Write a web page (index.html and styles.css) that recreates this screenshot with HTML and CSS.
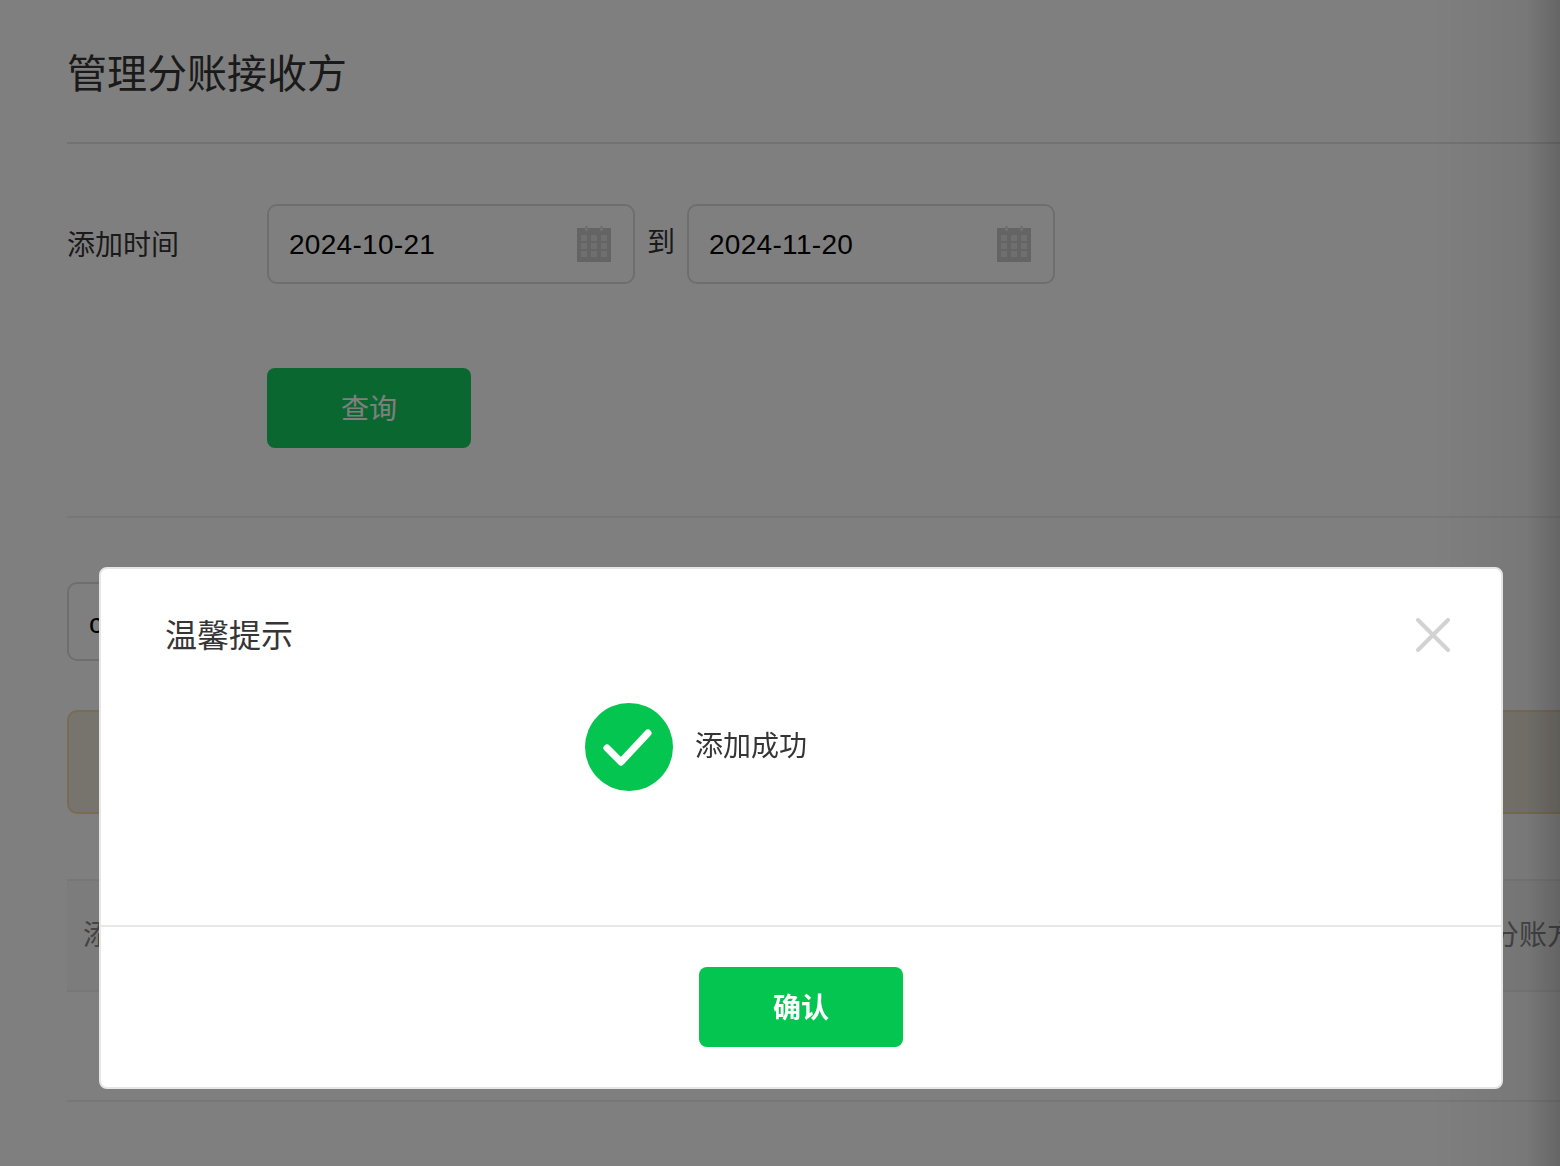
FILE: index.html

```html
<!DOCTYPE html>
<html>
  <head>
    <meta charset="utf-8">
    <title>管理分账接收方</title>
    <link rel="stylesheet" href="styles.css">
  </head>
  <body>
    <div class="page">
      <h1 class="page-title">管理分账接收方</h1>

      <div class="filter-row">
        <label class="filter-label">添加时间</label>
        <div class="date-input">
          <span class="date-value">2024-10-21</span>
          <svg class="calendar" viewBox="0 0 34 36" width="34" height="36">
            <use href="#calendar-icon"></use>
          </svg>
        </div>
        <span class="date-sep">到</span>
        <div class="date-input">
          <span class="date-value">2024-11-20</span>
          <svg class="calendar" viewBox="0 0 34 36" width="34" height="36">
            <use href="#calendar-icon"></use>
          </svg>
        </div>
      </div>

      <div class="filter-actions">
        <button class="btn-primary">查询</button>
      </div>

      <div class="search-row">
        <div class="search-input">c</div>
      </div>

      <div class="notice"></div>

      <div class="table-head">
        <span>添加时间</span>
        <span>分账方式</span>
      </div>
      <div class="table-row"></div>
    </div>

    <div class="mask"></div>
    <div class="edge-shadow"></div>

    <div class="dialog">
      <div class="dialog-head">
        <h2 class="dialog-title">温馨提示</h2>
        <svg class="dialog-close" viewBox="0 0 34 34" width="34" height="34">
          <path d="M2 2 L32 32 M32 2 L2 32" stroke="#d2d2d2" stroke-width="4" stroke-linecap="round" fill="none"></path>
        </svg>
      </div>
      <div class="dialog-body">
        <svg class="success-icon" viewBox="0 0 88 88" width="88" height="88">
          <circle cx="44" cy="44" r="44" fill="#04c550"></circle>
          <path d="M22 45 L36 59 L63 30" stroke="#fff" stroke-width="7" stroke-linecap="round" stroke-linejoin="round" fill="none"></path>
        </svg>
        <span class="success-text">添加成功</span>
      </div>
      <div class="dialog-foot">
        <button class="btn-confirm">确认</button>
      </div>
    </div>

    <svg class="icon-defs" width="0" height="0">
      <symbol id="calendar-icon" viewBox="0 0 34 36">
        <rect x="0" y="2" width="34" height="34" fill="#c8c8c8"></rect>
        <rect x="8" y="0" width="3" height="5" fill="#e0e0e0"></rect>
        <rect x="23" y="0" width="3" height="5" fill="#e0e0e0"></rect>
        <g fill="#dedede">
          <rect x="4" y="9" width="6" height="6"></rect>
          <rect x="14" y="9" width="6" height="6"></rect>
          <rect x="24" y="9" width="6" height="6"></rect>
          <rect x="4" y="17" width="6" height="6"></rect>
          <rect x="14" y="17" width="6" height="6"></rect>
          <rect x="24" y="17" width="6" height="6"></rect>
          <rect x="4" y="25" width="6" height="6"></rect>
          <rect x="14" y="25" width="6" height="6"></rect>
          <rect x="24" y="25" width="6" height="6"></rect>
        </g>
      </symbol>
    </svg>
  </body>
</html>
```

FILE: styles.css

```css
/* General page */
html,
body {
  height: 100%;
  margin: 0;
  overflow: hidden;
}

body {
  font-family: "Liberation Sans", "Noto Sans CJK SC", sans-serif;
  background-color: #fff;
  color: #353535;
}

.page {
  padding-left: 67px;
}

/* Title */
.page-title {
  margin: 0;
  height: 142px;
  line-height: 148px;
  font-size: 40px;
  font-weight: 400;
  border-bottom: 2px solid #e5e5e5;
}

/* Date filter */
.filter-row {
  display: flex;
  align-items: center;
  margin-top: 60px;
}

.filter-label {
  width: 200px;
  margin-top: -2px;
  font-size: 28px;
}

.date-input {
  width: 368px;
  height: 80px;
  box-sizing: border-box;
  padding: 0 22px 0 20px;
  display: flex;
  align-items: center;
  justify-content: space-between;
  border: 2px solid #ddd;
  border-radius: 10px;
  font-size: 28px;
  color: #000;
}

.date-value {
  margin-top: 2px;
  letter-spacing: 0.3px;
}

.date-sep {
  width: 52px;
  margin-top: -8px;
  text-align: center;
  font-size: 28px;
}

.icon-defs {
  display: block;
}

/* Query button */
.filter-actions {
  margin-top: 84px;
  padding-left: 200px;
  padding-bottom: 68px;
  border-bottom: 2px solid #eee;
}

.btn-primary {
  display: block;
  width: 204px;
  height: 80px;
  padding: 0 0 2px;
  border: none;
  border-radius: 8px;
  background-color: #15cf5f;
  color: #fff;
  font-family: inherit;
  font-size: 28px;
}

/* Search */
.search-row {
  margin-top: 64px;
}

.search-input {
  width: 500px;
  height: 79px;
  box-sizing: border-box;
  padding-left: 20px;
  line-height: 80px;
  border: 2px solid #ddd;
  border-radius: 10px;
  font-size: 28px;
  color: #000;
}

/* Yellow notice */
.notice {
  margin-top: 49px;
  width: 1600px;
  height: 104px;
  box-sizing: border-box;
  border: 2px solid #f1d9a6;
  border-radius: 10px;
  background-color: #eee8dc;
}

/* Table */
.table-head {
  margin-top: 65px;
  width: 1600px;
  height: 113px;
  box-sizing: border-box;
  padding: 0 0 5px 16px;
  display: grid;
  grid-template-columns: 1408px auto;
  align-items: center;
  border-top: 2px solid #eee;
  border-bottom: 2px solid #eee;
  background-color: #f9f9f9;
  font-size: 28px;
  color: #888;
}

.table-row {
  width: 1600px;
  height: 110px;
  box-sizing: border-box;
  border-bottom: 2px solid #eee;
}

/* Overlay */
.mask {
  position: fixed;
  inset: 0;
  background-color: rgba(0, 0, 0, 0.5);
}

.edge-shadow {
  position: fixed;
  top: 0;
  right: 0;
  bottom: 0;
  width: 130px;
  background: linear-gradient(to right, rgba(0, 0, 0, 0), rgba(0, 0, 0, 0.06) 75%, rgba(0, 0, 0, 0.2));
}

/* Dialog */
.dialog {
  position: fixed;
  left: 99px;
  top: 567px;
  width: 1404px;
  height: 522px;
  box-sizing: border-box;
  border: 2px solid #e6e6e6;
  border-radius: 8px;
  background-color: #fff;
  display: flex;
  flex-direction: column;
}

.dialog-head {
  display: flex;
  align-items: center;
  justify-content: space-between;
  padding: 42px 51px 0 64px;
  height: 48px;
}

.dialog-title {
  margin: 0;
  margin-top: -4px;
  font-size: 32px;
  font-weight: 400;
}

.dialog-body {
  height: 268px;
  box-sizing: border-box;
  padding: 44px 0 0 484px;
  display: flex;
  align-items: flex-start;
  gap: 22px;
  border-bottom: 2px solid #e9e9e9;
}

.success-text {
  font-size: 28px;
  line-height: 87px;
}

.dialog-foot {
  display: flex;
  justify-content: center;
  padding-top: 40px;
}

.btn-confirm {
  width: 204px;
  height: 80px;
  padding: 0 0 2px;
  border: none;
  border-radius: 8px;
  background-color: #04c550;
  color: #fff;
  font-family: inherit;
  font-size: 28px;
  font-weight: 700;
}
```
